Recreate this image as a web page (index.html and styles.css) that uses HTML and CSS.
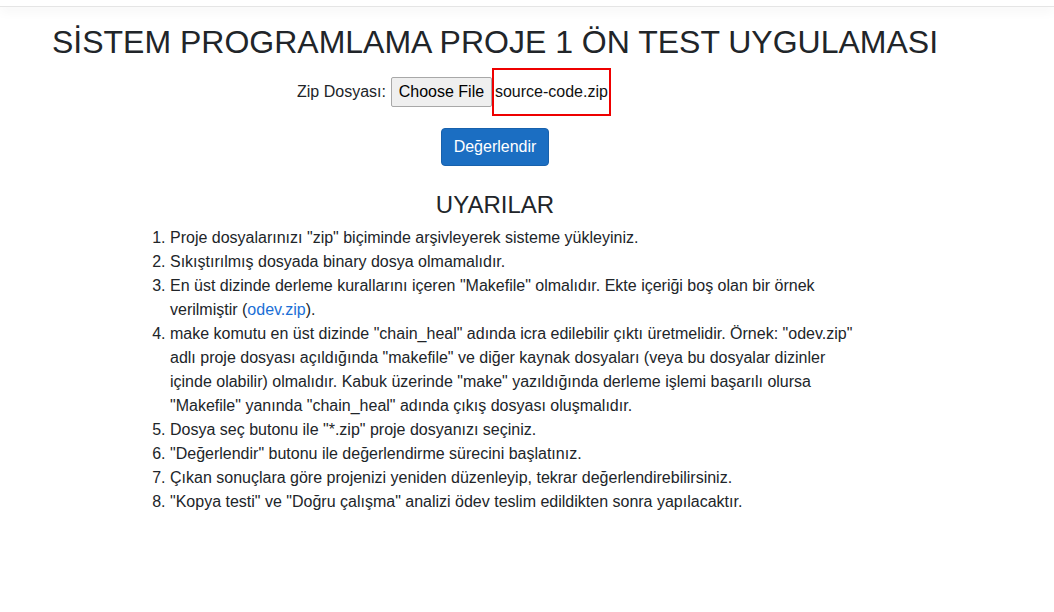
FILE: index.html
```html
<!DOCTYPE html>
<html lang="tr">
<head>
<meta charset="utf-8">
<title>Sistem Programlama Proje 1 Ön Test Uygulaması</title>
<link rel="stylesheet" href="styles.css">
</head>
<body>
<header class="topbar"></header>
<main class="page">
  <h1 class="title">SİSTEM PROGRAMLAMA PROJE 1 ÖN TEST UYGULAMASI</h1>
  <form class="upload">
    <label class="upload-label">Zip Dosyası:</label>
    <span class="file-btn">Choose File</span>
    <span class="file-name">source-code.zip</span>
  </form>
  <div class="actions">
    <button class="btn-primary" type="button">Değerlendir</button>
  </div>
  <h3 class="warn-title">UYARILAR</h3>
  <ol class="rules">
    <li>Proje dosyalarınızı "zip" biçiminde arşivleyerek sisteme yükleyiniz.</li>
    <li>Sıkıştırılmış dosyada binary dosya olmamalıdır.</li>
    <li>En üst dizinde derleme kurallarını içeren "Makefile" olmalıdır. Ekte içeriği boş olan bir örnek verilmiştir (<a href="#" class="link">odev.zip</a>).</li>
    <li>make komutu en üst dizinde "chain_heal" adında icra edilebilir çıktı üretmelidir. Örnek: "odev.zip" adlı proje dosyası açıldığında "makefile" ve diğer kaynak dosyaları (veya bu dosyalar dizinler içinde olabilir) olmalıdır. Kabuk üzerinde "make" yazıldığında derleme işlemi başarılı olursa "Makefile" yanında "chain_heal" adında çıkış dosyası oluşmalıdır.</li>
    <li>Dosya seç butonu ile "*.zip" proje dosyanızı seçiniz.</li>
    <li>"Değerlendir" butonu ile değerlendirme sürecini başlatınız.</li>
    <li>Çıkan sonuçlara göre projenizi yeniden düzenleyip, tekrar değerlendirebilirsiniz.</li>
    <li>"Kopya testi" ve "Doğru çalışma" analizi ödev teslim edildikten sonra yapılacaktır.</li>
  </ol>
</main>
</body>
</html>
```

FILE: styles.css
```css
html, body {
  margin: 0;
  padding: 0;
  background: #fff;
}
body {
  font-family: "Liberation Sans", Arial, sans-serif;
  font-size: 16px;
  line-height: 24px;
  color: #212529;
}
.topbar {
  height: 6px;
  border-bottom: 1px solid #e5e5e5;
  box-shadow: 0 4px 12px rgba(0, 0, 0, 0.05);
}
.page {
  width: 906px;
  margin-left: 42px;
  padding-top: 16px;
  text-align: center;
}
.title {
  margin: 0 0 7px;
  font-size: 32px;
  line-height: 38px;
  font-weight: normal;
  white-space: nowrap;
}
.upload {
  display: flex;
  align-items: center;
  padding-left: 255px;
  margin: 0;
}
.upload-label {
  margin-right: 5px;
}
.file-btn {
  box-sizing: border-box;
  height: 30px;
  width: 101px;
  line-height: 28px;
  text-align: center;
  background: #efefef;
  border: 1px solid #a8a8a8;
  border-radius: 2px;
  color: #000;
}
.file-name {
  border: 2px solid #ee0000;
  padding: 10px 1px 10px 1px;
  color: #111;
}
.actions {
  margin-top: 12px;
}
.btn-primary {
  font-family: inherit;
  font-size: 16px;
  line-height: 24px;
  padding: 6px 12px;
  color: #fff;
  background: #1b6ec2;
  border: 1px solid #1861ac;
  border-radius: 4px;
  cursor: pointer;
}
.warn-title {
  margin: 24px 0 7px;
  font-size: 24px;
  line-height: 29px;
  font-weight: normal;
}
.rules {
  width: 690px;
  margin: 0 auto;
  padding-left: 40px;
  text-align: left;
}
.rules li {
  white-space: normal;
}
.link {
  color: #1a6fd6;
  text-decoration: none;
}
```
